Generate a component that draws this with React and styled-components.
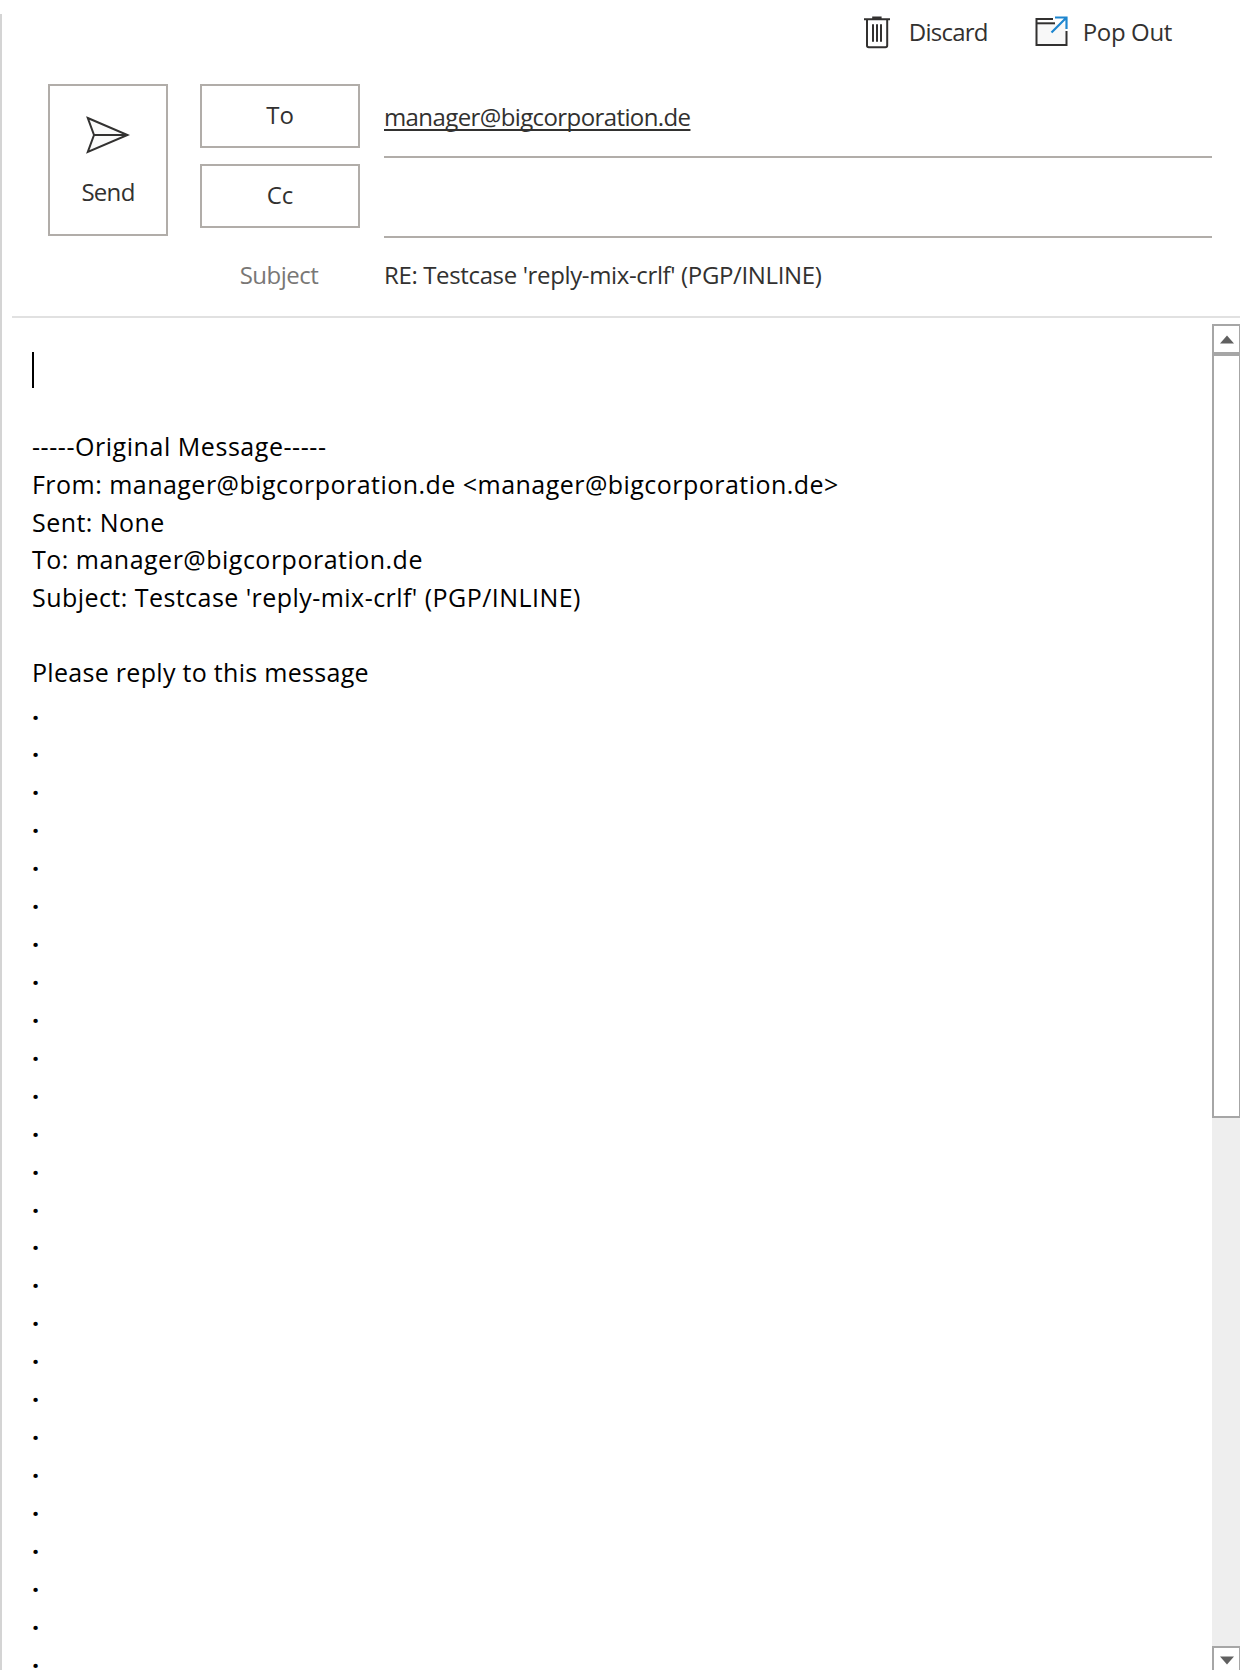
import React from "react";
import styled, { createGlobalStyle } from "styled-components";

const GlobalStyle = createGlobalStyle`
  * { box-sizing: border-box; }
  body { margin: 0; background: #fff; overflow: hidden; }
`;

const Page = styled.div`
  display: flex;
  width: 1240px;
  height: 1670px;
  overflow: hidden;
  background: #fff;
  color: #323130;
  font-family: "Open Sans", "Noto Sans", sans-serif;
  font-size: 24px;
  line-height: 32px;
`;

const Rail = styled.div`
  flex: none;
  width: 2px;
  margin-top: 14px;
  background: #d4d4d4;
`;

const Main = styled.main`
  flex: 1;
  min-width: 0;
  display: flex;
  flex-direction: column;
`;

const Toolbar = styled.header`
  flex: none;
  display: flex;
  justify-content: flex-end;
  gap: 47px;
  height: 84px;
  padding: 16px 68px 0 0;
`;

const ToolButton = styled.button`
  display: flex;
  align-items: flex-start;
  gap: ${(p) => p.$gap}px;
  height: 34px;
  padding: 0;
  border: 0;
  background: none;
  color: inherit;
  font: inherit;
  letter-spacing: ${(p) => p.$tracking}px;
  white-space: nowrap;

  svg { display: block; }
`;

const Form = styled.section`
  flex: none;
  display: flex;
  gap: 32px;
  height: 232px;
  padding: 0 28px 0 46px;
`;

const SendButton = styled.button`
  display: flex;
  flex-direction: column;
  align-items: center;
  width: 120px;
  height: 152px;
  padding: 30px 0 0;
  border: 2px solid #b1ada9;
  background: #fff;
  color: inherit;
  font: inherit;
  letter-spacing: -0.7px;

  svg { display: block; margin-bottom: 22px; }
`;

const Fields = styled.div`
  flex: 1;
  display: flex;
  flex-direction: column;
`;

const FieldRow = styled.div`
  flex: none;
  display: grid;
  grid-template-columns: 160px 1fr;
  column-gap: 24px;
  height: 80px;
`;

const FieldButton = styled.button`
  height: 64px;
  padding: 0 0 2px;
  border: 2px solid #b1ada9;
  background: #fff;
  color: inherit;
  font: inherit;
`;

const Field = styled.div`
  height: 74px;
  padding-top: 17px;
  border-bottom: 2px solid #b1ada9;
`;

const Recipient = styled.span`
  letter-spacing: -0.6px;
  text-decoration: underline;
  text-decoration-thickness: 2px;
  text-underline-offset: 3px;
  text-decoration-skip-ink: none;
`;

const SubjectLabel = styled.span`
  padding: 15px 2px 0 0;
  color: #797775;
  text-align: center;
  letter-spacing: -0.5px;
`;

const SubjectText = styled.span`
  padding-top: 15px;
  letter-spacing: -0.36px;
`;

const Divider = styled.hr`
  flex: none;
  width: calc(100% - 10px);
  height: 2px;
  margin: 0 0 0 10px;
  border: 0;
  background: #e1e1e1;
`;

const Body = styled.section`
  flex: 1;
  min-height: 0;
  display: flex;
`;

const Message = styled.div`
  flex: 1;
  overflow: hidden;
  padding: 34px 0 0 30px;
  color: #000;
  font-size: 25px;
`;

const Line = styled.div`
  height: ${(p) => p.$height || 37.9}px;
  line-height: 37.9px;
  letter-spacing: ${(p) => p.$tracking || 0}px;
  white-space: pre;
`;

const Dot = styled(Line)`
  height: 37.93px;
  font-weight: 700;
`;

const Caret = styled.span`
  display: block;
  width: 2px;
  height: 36px;
  background: #000;
`;

const Scrollbar = styled.div`
  flex: none;
  display: flex;
  flex-direction: column;
  width: 28px;
  margin: 6px 0 -5px;
  background: #eee;
`;

const ScrollButton = styled.div`
  flex: none;
  display: grid;
  place-items: center;
  height: ${(p) => p.$height}px;
  border: 2px solid #a6a6a6;
  border-right-width: 1px;
  background: #fff;
`;

const Thumb = styled.div`
  flex: none;
  height: 764px;
  border: 2px solid #a6a6a6;
  border-right-width: 1px;
  background: #fff;
`;

const Track = styled.div`
  flex: 1;
`;

const TrashIcon = () => (
  <svg width="26" height="33" viewBox="0 0 26 33" fill="none" stroke="#323130" strokeWidth="2">
    <path d="M0 3.2H26M8.2 1.4H17.6" />
    <path d="M3 3V29.5Q3 31.3 4.8 31.3H21.4Q23.2 31.3 23.2 29.5V3" />
    <path d="M9 8.3V25.8M13 8.3V25.8M17 8.3V25.8" />
  </svg>
);

const PopOutIcon = () => (
  <svg width="33" height="32" viewBox="0 0 33 32" fill="none" strokeWidth="2">
    <path d="M2 8H31V29H2Z" fill="#f8f8f8" />
    <path d="M18 3H1.5V29H31.5V15" stroke="#323130" />
    <path d="M2 7.3H20" stroke="#323130" />
    <path d="M16.5 16.5L31 2M20 1.5H31.5V13" stroke="#1e86cf" strokeWidth="2.2" />
  </svg>
);

const SendIcon = () => (
  <svg width="44" height="38" viewBox="0 0 44 38" fill="none" stroke="#323130" strokeWidth="2">
    <path d="M1.8 2L41.5 19L1.8 36L8 19Z" fill="#fafafa" />
    <path d="M8 19H41" />
  </svg>
);

const UpArrow = () => (
  <svg width="16" height="9" viewBox="0 0 16 9">
    <path d="M1 8.5L8 0.5L15 8.5Z" fill="#606060" />
  </svg>
);

const DownArrow = () => (
  <svg width="16" height="9" viewBox="0 0 16 9">
    <path d="M1 0.5L8 8.5L15 0.5Z" fill="#606060" />
  </svg>
);

const quoted = [
  { text: "-----Original Message-----", tracking: 0.55 },
  { text: "From: manager@bigcorporation.de <manager@bigcorporation.de>", tracking: 0.47 },
  { text: "Sent: None", tracking: 0.45 },
  { text: "To: manager@bigcorporation.de", tracking: 0.49 },
  { text: "Subject: Testcase 'reply-mix-crlf' (PGP/INLINE)", tracking: 0.45 },
];

const DOT_LINES = 26;

export default function App() {
  return (
    <>
      <GlobalStyle />
      <Page>
        <Rail />
        <Main>
          <Toolbar>
            <ToolButton $gap={19} $tracking={-0.75}><TrashIcon />Discard</ToolButton>
            <ToolButton $gap={15} $tracking={-0.35}><PopOutIcon />Pop Out</ToolButton>
          </Toolbar>
          <Form>
            <SendButton><SendIcon />Send</SendButton>
            <Fields>
              <FieldRow>
                <FieldButton>To</FieldButton>
                <Field><Recipient>manager@bigcorporation.de</Recipient></Field>
              </FieldRow>
              <FieldRow>
                <FieldButton>Cc</FieldButton>
                <Field />
              </FieldRow>
              <FieldRow>
                <SubjectLabel>Subject</SubjectLabel>
                <SubjectText>RE: Testcase 'reply-mix-crlf' (PGP/INLINE)</SubjectText>
              </FieldRow>
            </Fields>
          </Form>
          <Divider />
          <Body>
            <Message>
              <Line><Caret /></Line>
              <Line />
              {quoted.map((line) => (
                <Line key={line.text} $tracking={line.tracking}>{line.text}</Line>
              ))}
              <Line $height={36.4} />
              <Line $tracking={0.3}>Please reply to this message</Line>
              {Array.from({ length: DOT_LINES }, (_, i) => <Dot key={i}>.</Dot>)}
            </Message>
            <Scrollbar>
              <ScrollButton $height={30}><UpArrow /></ScrollButton>
              <Thumb />
              <Track />
              <ScrollButton $height={29}><DownArrow /></ScrollButton>
            </Scrollbar>
          </Body>
        </Main>
      </Page>
    </>
  );
}
